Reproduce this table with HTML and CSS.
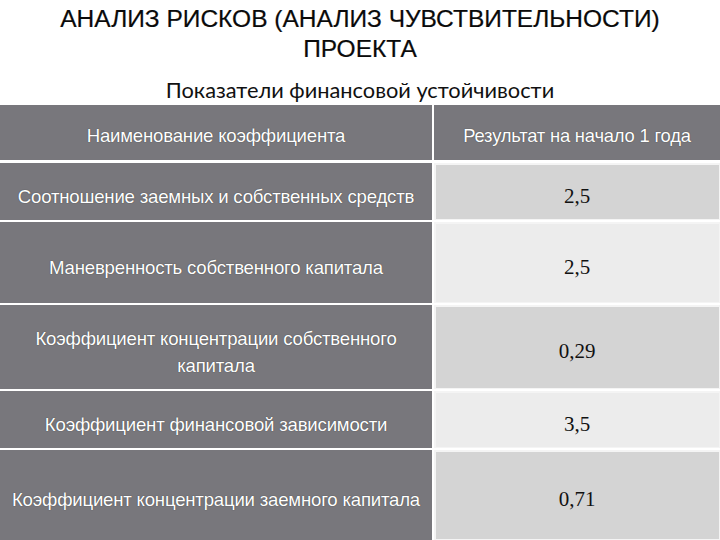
FILE: index.html
```html
<!DOCTYPE html>
<html>
<head>
<meta charset="utf-8">
<link rel="stylesheet" href="styles.css">
</head>
<body>
<div class="page">
  <h1 class="title">АНАЛИЗ РИСКОВ (АНАЛИЗ ЧУВСТВИТЕЛЬНОСТИ)<br>ПРОЕКТА</h1>
  <div class="subtitle">Показатели финансовой устойчивости</div>
  <div class="table">
    <div class="row h55 head">
      <div class="name">Наименование коэффициента</div>
      <div class="val headval">Результат на начало 1 года</div>
    </div>
    <div class="row h57">
      <div class="name">Соотношение заемных и собственных средств</div>
      <div class="val dark">2,5</div>
    </div>
    <div class="row h81">
      <div class="name">Маневренность собственного капитала</div>
      <div class="val light">2,5</div>
    </div>
    <div class="row h84">
      <div class="name">Коэффициент концентрации собственного<br>капитала</div>
      <div class="val dark">0,29</div>
    </div>
    <div class="row h57">
      <div class="name">Коэффициент финансовой зависимости</div>
      <div class="val light">3,5</div>
    </div>
    <div class="row h90">
      <div class="name">Коэффициент концентрации заемного капитала</div>
      <div class="val dark">0,71</div>
    </div>
  </div>
</div>
</body>
</html>
```
FILE: styles.css
```css
html, body {
  margin: 0;
  padding: 0;
  background: #ffffff;
}
.page {
  width: 720px;
  height: 540px;
  overflow: hidden;
  display: flex;
  flex-direction: column;
}
.title {
  margin: 4px 0 0 0;
  height: 62px;
  font-family: "Liberation Sans", Arial, sans-serif;
  font-weight: normal;
  font-size: 24.5px;
  line-height: 30px;
  text-align: center;
  color: #0a0a0a;
  -webkit-text-stroke: 0.2px #0a0a0a;
}
.subtitle {
  margin-top: 2px;
  height: 42px;
  box-sizing: border-box;
  padding-top: 8px;
  font-family: "Lato", "Open Sans", sans-serif;
  font-size: 21.8px;
  color: #111;
  display: flex;
  align-items: center;
  justify-content: center;
}
.table {
  display: flex;
  flex-direction: column;
  gap: 2px;
  background: #ffffff;
}
.row {
  display: flex;
  gap: 2px;
}
.head { margin-bottom: 1px; }
.h55 { height: 55px; }
.h57 { height: 57px; }
.h81 { height: 81px; }
.h84 { height: 84px; }
.h90 { height: 90px; }
.name {
  width: 432px;
  flex: none;
  box-sizing: border-box;
  padding-top: 9px;
  background: #78777c;
  color: #ffffff;
  font-family: "Liberation Sans", Arial, sans-serif;
  font-size: 18.6px;
  line-height: 27px;
  letter-spacing: -0.2px;
  text-align: center;
  display: flex;
  align-items: center;
  justify-content: center;
  text-shadow: 0 0 1px #333;
}
.head .name { padding-top: 6px; }
.val {
  flex: 1;
  box-sizing: border-box;
  padding-top: 9px;
  display: flex;
  align-items: center;
  justify-content: center;
  font-family: "Liberation Serif", serif;
  font-size: 21px;
  color: #111;
  box-shadow: inset 2px 2px 0 #f4f4f4, inset -1px -1px 0 #f4f4f4;
}
.headval {
  background: #78777c;
  color: #ffffff;
  font-family: "Liberation Sans", Arial, sans-serif;
  font-size: 18.4px;
  letter-spacing: -0.2px;
  box-shadow: none;
  text-shadow: 0 0 1px #333;
  padding-top: 6px;
}
.dark { background: #d4d4d4; }
.light { background: #ececec; }
```
